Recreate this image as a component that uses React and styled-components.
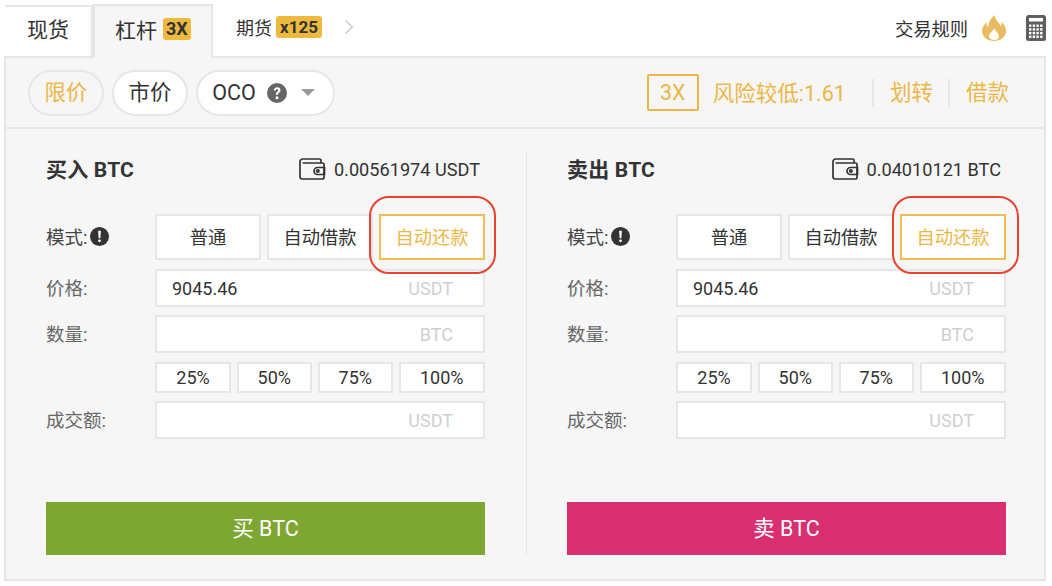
import React from "react";
import styled, { createGlobalStyle } from "styled-components";

const GlobalStyle = createGlobalStyle`
  html, body {
    margin: 0;
    background: #fff;
  }
  * {
    box-sizing: border-box;
  }
`;

const yellow = "#ecb746";
const line = "#e6e6e6";

const Page = styled.div`
  width: 1052px;
  height: 586px;
  padding: 4px 6px 0 4px;
  overflow: hidden;
  color: #333;
  font-family: Roboto, "Noto Sans CJK SC", sans-serif;
`;

const TabBar = styled.div`
  display: flex;
  align-items: stretch;
  height: 52px;
  padding-left: 1px;
`;

const Tab = styled.div`
  display: flex;
  align-items: center;
  gap: 6px;
  width: ${({ $width }) => $width}px;
  padding: 0 0 7px ${({ $active }) => ($active ? 20 : 22)}px;
  font-size: 21px;
  position: relative;
  z-index: 1;
  border: 2px solid ${line};
  border-left-width: ${({ $active }) => ($active ? 2 : 0)}px;
  border-bottom: 0;
  background: ${({ $active }) => ($active ? "#f6f6f6" : "#fff")};
  margin-top: ${({ $active }) => ($active ? 0 : 1)}px;
  margin-bottom: ${({ $active }) => ($active ? -2 : 0)}px;
`;

const Badge = styled.span`
  display: inline-flex;
  align-items: center;
  justify-content: center;
  height: ${({ $height }) => $height}px;
  padding: 0 ${({ $pad }) => $pad}px;
  border-radius: 3px;
  background: #edba3e;
  color: #333;
  font-size: ${({ $size }) => $size}px;
  font-weight: 700;
`;

const FuturesLink = styled.div`
  display: flex;
  align-items: center;
  gap: 4px;
  margin: -6px 0 0 23px;
  font-size: 18px;
`;

const Chevron = styled.svg`
  width: 10px;
  height: 16px;
  margin-left: 18px;
  fill: none;
  stroke: #c9c9c9;
  stroke-width: 1.4;
`;

const TabTools = styled.div`
  display: flex;
  align-items: center;
  margin-left: auto;
  margin-top: -4px;
  font-size: 18.3px;
`;

const Flame = styled.svg`
  width: 24px;
  height: 26px;
  margin: 0 20px 0 14px;
  fill: #e9bb5e;
`;

const Calculator = styled.svg`
  width: 20px;
  height: 26px;
`;

const Panel = styled.div`
  height: 525px;
  border: 2px solid ${line};
  background: #f6f6f6;
`;

const Toolbar = styled.div`
  display: flex;
  align-items: center;
  height: 71px;
  padding: 0 35px 0 22px;
  border-bottom: 2px solid ${line};
  font-size: 21.5px;
`;

const Pill = styled.div`
  display: flex;
  align-items: center;
  justify-content: center;
  gap: 11px;
  width: ${({ $width }) => $width}px;
  height: 46px;
  margin-right: 8px;
  padding: 0 ${({ $shift }) => $shift || 0}px ${({ $shift }) => ($shift ? 0 : 4)}px 0;
  border: 2px solid ${line};
  border-radius: 23px;
  background: ${({ $active }) => ($active ? "#f6f6f6" : "#fff")};
  color: ${({ $active }) => ($active ? yellow : "#333")};
`;

const HelpIcon = styled.svg`
  width: 20px;
  height: 20px;
`;

const Caret = styled.span`
  width: 0;
  height: 0;
  margin-left: 3px;
  border-left: 7px solid transparent;
  border-right: 7px solid transparent;
  border-top: 7px solid #999;
`;

const ToolbarRight = styled.div`
  display: flex;
  align-items: center;
  margin-left: auto;
  color: ${yellow};
`;

const LeverageBox = styled.div`
  display: flex;
  align-items: center;
  justify-content: center;
  width: 52px;
  height: 37px;
  margin-right: 14px;
  border: 2px solid ${yellow};
  border-radius: 2px;
`;

const Risk = styled.span`
  padding-bottom: 3px;
`;

const ToolLink = styled.span`
  display: flex;
  align-items: center;
  height: 28px;
  margin-left: ${({ $gap }) => $gap}px;
  padding: 0 0 4px 16px;
  border-left: 2px solid ${line};
`;

const Body = styled.div`
  display: flex;
  padding: 22px 38px 0 40px;
`;

const Side = styled.div`
  width: 439px;
  flex: none;
`;

const Divider = styled.div`
  width: 2px;
  height: 402px;
  margin: 2px 40px 0 41px;
  background: ${line};
`;

const SideHead = styled.div`
  display: flex;
  align-items: center;
  justify-content: space-between;
  height: 36px;
  margin-bottom: 27px;
  padding-right: 5px;
`;

const SideTitle = styled.div`
  padding-bottom: 2px;
  font-size: 21px;
  font-weight: 700;
  letter-spacing: 0.2px;
`;

const Balance = styled.div`
  display: flex;
  align-items: center;
  gap: 8px;
  font-size: 18.15px;
`;

const WalletIcon = styled.svg`
  width: 27px;
  height: 22px;
  fill: none;
  stroke: #333;
  stroke-width: 1.7;
`;

const Row = styled.div`
  display: flex;
  align-items: center;
  margin-bottom: ${({ $mb }) => $mb}px;
`;

const Label = styled.div`
  display: flex;
  align-items: center;
  gap: 3px;
  width: 109px;
  flex: none;
  padding-bottom: 2px;
  color: ${({ $dark }) => ($dark ? "#444" : "#666")};
  font-size: 18.5px;
`;

const AlertIcon = styled.svg`
  width: 19px;
  height: 19px;
`;

const ModeGroup = styled.div`
  display: flex;
  gap: 6px;
  flex: 1;
`;

const ModeButton = styled.div`
  position: relative;
  display: flex;
  align-items: center;
  justify-content: center;
  flex: 1;
  height: 46px;
  padding-bottom: 2px;
  background: #fff;
  border: 2px solid ${({ $active }) => ($active ? "#efbd55" : line)};
  color: ${({ $active }) => ($active ? yellow : "#333")};
  font-size: 18.3px;
`;

const Ring = styled.span`
  position: absolute;
  top: -20px;
  bottom: -16px;
  left: ${({ $left }) => $left}px;
  right: ${({ $right }) => $right}px;
  border: 2px solid #e8432e;
  border-radius: 20px;
`;

const Field = styled.div`
  display: flex;
  align-items: center;
  justify-content: space-between;
  flex: 1;
  height: 38px;
  padding: 0 30px 0 15px;
  background: #fff;
  border: 2px solid ${line};
  font-size: 18px;
`;

const Unit = styled.span`
  margin-left: auto;
  color: #cfcfcf;
`;

const Percents = styled.div`
  display: grid;
  grid-template-columns: 76px 75.5px 75.5px 1fr;
  gap: 5.5px;
  flex: 1;
`;

const Percent = styled.div`
  display: flex;
  align-items: center;
  justify-content: center;
  height: 31px;
  background: #fff;
  border: 2px solid ${line};
  font-size: 18px;
`;

const SubmitButton = styled.div`
  display: flex;
  align-items: center;
  justify-content: center;
  height: 53px;
  margin-top: 63px;
  padding-bottom: 5px;
  background: ${({ $color }) => $color};
  color: #fff;
  font-size: 21.5px;
`;

function FormSide({ title, balance, submit, color, ringLeft, ringRight }) {
  return (
    <Side>
      <SideHead>
        <SideTitle>{title}</SideTitle>
        <Balance>
          <WalletIcon viewBox="0 0 27 22">
            <path d="M22 5V2.600C22 1.700 21.300 1 20.400 1H3.600C2.200 1 1 2.200 1 3.600v15.200C1 20 2 21 3.200 21h20c1 0 1.800-.8 1.800-1.800V6.600C25 5.700 24.300 5 23.400 5H3.500" />
            <path d="M25.500 9.500h-7a3.500 3.500 0 0 0 0 7h7z" />
            <circle cx="18.800" cy="13" r="1.200" />
          </WalletIcon>
          {balance}
        </Balance>
      </SideHead>
      <Row $mb={9}>
        <Label $dark>
          模式:
          <AlertIcon viewBox="0 0 20 20">
            <circle cx="10" cy="10" r="10" fill="#333" />
            <path d="M8.600 4h2.800l-.5 7.800H9.100z" fill="#fff" />
            <circle cx="10" cy="14.600" r="1.500" fill="#fff" />
          </AlertIcon>
        </Label>
        <ModeGroup>
          <ModeButton>普通</ModeButton>
          <ModeButton>自动借款</ModeButton>
          <ModeButton $active>
            自动还款
            <Ring $left={ringLeft} $right={ringRight} />
          </ModeButton>
        </ModeGroup>
      </Row>
      <Row $mb={8}>
        <Label>价格:</Label>
        <Field>
          9045.46
          <Unit>USDT</Unit>
        </Field>
      </Row>
      <Row $mb={9}>
        <Label>数量:</Label>
        <Field>
          <Unit>BTC</Unit>
        </Field>
      </Row>
      <Row $mb={8}>
        <Label />
        <Percents>
          {["25%", "50%", "75%", "100%"].map((p) => (
            <Percent key={p}>{p}</Percent>
          ))}
        </Percents>
      </Row>
      <Row $mb={0}>
        <Label>成交额:</Label>
        <Field>
          <Unit>USDT</Unit>
        </Field>
      </Row>
      <SubmitButton $color={color}>{submit}</SubmitButton>
    </Side>
  );
}

export default function App() {
  const keys = [];
  for (let r = 0; r < 4; r++) {
    for (let c = 0; c < 4; c++) {
      keys.push(<rect key={`${r}-${c}`} x={3 + c * 3.7} y={9.500 + r * 3.7} width="2.400" height="2.400" fill="#fff" />);
    }
  }
  return (
    <Page>
      <GlobalStyle />
      <TabBar>
        <Tab $width={88}>现货</Tab>
        <Tab $width={120} $active>
          杠杆
          <Badge $height={22} $pad={3} $size={18}>
            3X
          </Badge>
        </Tab>
        <FuturesLink>
          期货
          <Badge $height={22} $pad={4} $size={17}>
            x125
          </Badge>
          <Chevron viewBox="0 0 10 16">
            <path d="M1.500 1.500 8.500 8l-7 6.500" />
          </Chevron>
        </FuturesLink>
        <TabTools>
          交易规则
          <Flame viewBox="0 0 24 26">
            <path
              fillRule="evenodd"
              d="M12.500 0C13 5 17 7 18.500 11c1-1 1.500-2.500 1.300-4C22.500 9.500 24 13 24 16c0 6-5.500 10-12 10S0 22 0 16c0-3.500 2-6.500 4.500-8.500 0 2 .5 3.500 1.500 4.500C6.500 7 9 3 12.500 0zM12 13c-.5 3-5 5-5 8.500 0 2 2 3.500 5 3.500s5-1.500 5-3.500C17 18 13 16 12 13z"
            />
          </Flame>
          <Calculator viewBox="0 0 20 26">
            <rect width="20" height="26" rx="2.500" fill="#5f5f5f" />
            <rect x="3" y="3" width="14" height="3.500" fill="#fff" />
            {keys}
          </Calculator>
        </TabTools>
      </TabBar>
      <Panel>
        <Toolbar>
          <Pill $width={76} $active>
            限价
          </Pill>
          <Pill $width={76}>市价</Pill>
          <Pill $width={139} $shift={4}>
            OCO
            <HelpIcon viewBox="0 0 20 20">
              <circle cx="10" cy="10" r="10" fill="#666" />
              <path d="M6.800 7.600C6.900 5.600 8.200 4.300 10.200 4.300c2 0 3.300 1.200 3.300 2.900 0 1.400-.8 2-1.700 2.700-.7.500-.9.900-.9 1.800H8.900c0-1.500.4-2.200 1.300-2.900.7-.5 1-.9 1-1.500 0-.7-.400-1.100-1.100-1.100-.7 0-1.200.5-1.200 1.400z" fill="#fff" />
              <circle cx="10" cy="14.700" r="1.500" fill="#fff" />
            </HelpIcon>
            <Caret />
          </Pill>
          <ToolbarRight>
            <LeverageBox>3X</LeverageBox>
            <Risk>风险较低:1.61</Risk>
            <ToolLink $gap={26}>划转</ToolLink>
            <ToolLink $gap={15}>借款</ToolLink>
          </ToolbarRight>
        </Toolbar>
        <Body>
          <FormSide
            title="买入 BTC"
            balance="0.00561974 USDT"
            submit="买 BTC"
            color="#7ea632"
            ringLeft={-12}
            ringRight={-13}
          />
          <Divider />
          <FormSide
            title="卖出 BTC"
            balance="0.04010121 BTC"
            submit="卖 BTC"
            color="#d92e70"
            ringLeft={-10}
            ringRight={-15}
          />
        </Body>
      </Panel>
    </Page>
  );
}
